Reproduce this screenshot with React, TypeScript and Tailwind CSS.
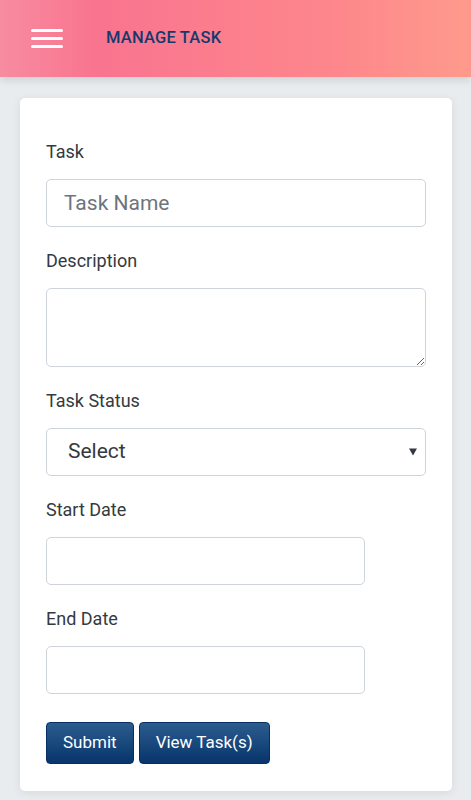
function Field({ label, children }: { label: string; children: React.ReactNode }) {
  return (
    <div className="mb-[22px]">
      <label className="block mb-[15px] text-[18px] leading-6 text-[#343a40]">{label}</label>
      {children}
    </div>
  );
}

export default function App() {
  const inputCls =
    "block h-12 border border-[#ced4da] rounded-[5px] bg-white px-[17px] text-[21px] text-[#343a40] placeholder:text-[#6c757d] outline-none";

  return (
    <div className="min-h-[800px] bg-[#e9ecef] font-['Roboto',sans-serif]">
      {/* Header */}
      <header className="h-[77px] flex items-center bg-[linear-gradient(90deg,#f78ca0_0%,#f9748f_20%,#fd868c_70%,#fe9a8b_100%)] shadow-[0_3px_8px_rgba(0,0,0,0.12)]">
        <button className="ml-[31px] w-8 flex flex-col gap-[5px]">
          <span className="block h-[3px] w-8 bg-white rounded-sm" />
          <span className="block h-[3px] w-8 bg-white rounded-sm" />
          <span className="block h-[3px] w-8 bg-white rounded-sm" />
        </button>
        <h1 className="ml-[43px] text-[16.5px] font-medium text-[#123a6e] tracking-[0.2px]">MANAGE TASK</h1>
      </header>

      {/* Form card */}
      <div className="mt-[21px] ml-5 mr-[19px] bg-white rounded-[5px] shadow-[0_2px_10px_rgba(0,0,0,0.08)] px-[26px] pt-[42px] pb-[27px]">
        <Field label="Task">
          <input className={inputCls + " w-full"} placeholder="Task Name" />
        </Field>
        <Field label="Description">
          <textarea className="block w-full h-[79px] border border-[#ced4da] rounded-[5px] bg-white px-[17px] py-2 text-[20px] outline-none" />
        </Field>
        <Field label="Task Status">
          <div className="relative">
            <select className={inputCls + " w-full appearance-none pl-[21px]"} defaultValue="">
              <option value="">Select</option>
              <option>Pending</option>
              <option>In Progress</option>
              <option>Completed</option>
            </select>
            <span className="pointer-events-none absolute right-[9px] top-1/2 -translate-y-1/2 w-0 h-0 border-x-[4px] border-x-transparent border-t-[7px] border-t-[#343a40]" />
          </div>
        </Field>
        <Field label="Start Date">
          <input className={inputCls + " w-[319px]"} />
        </Field>
        <Field label="End Date">
          <input className={inputCls + " w-[319px]"} />
        </Field>

        <div className="flex gap-[5px] mt-[28px]">
          <button className="h-[42px] px-4 rounded-[4px] border border-[#082f63] bg-[linear-gradient(180deg,#2c5c8e,#07356c)] text-white text-[17px]">
            Submit
          </button>
          <button className="h-[42px] px-4 rounded-[4px] border border-[#082f63] bg-[linear-gradient(180deg,#2c5c8e,#07356c)] text-white text-[17px]">
            View Task(s)
          </button>
        </div>
      </div>
    </div>
  );
}
